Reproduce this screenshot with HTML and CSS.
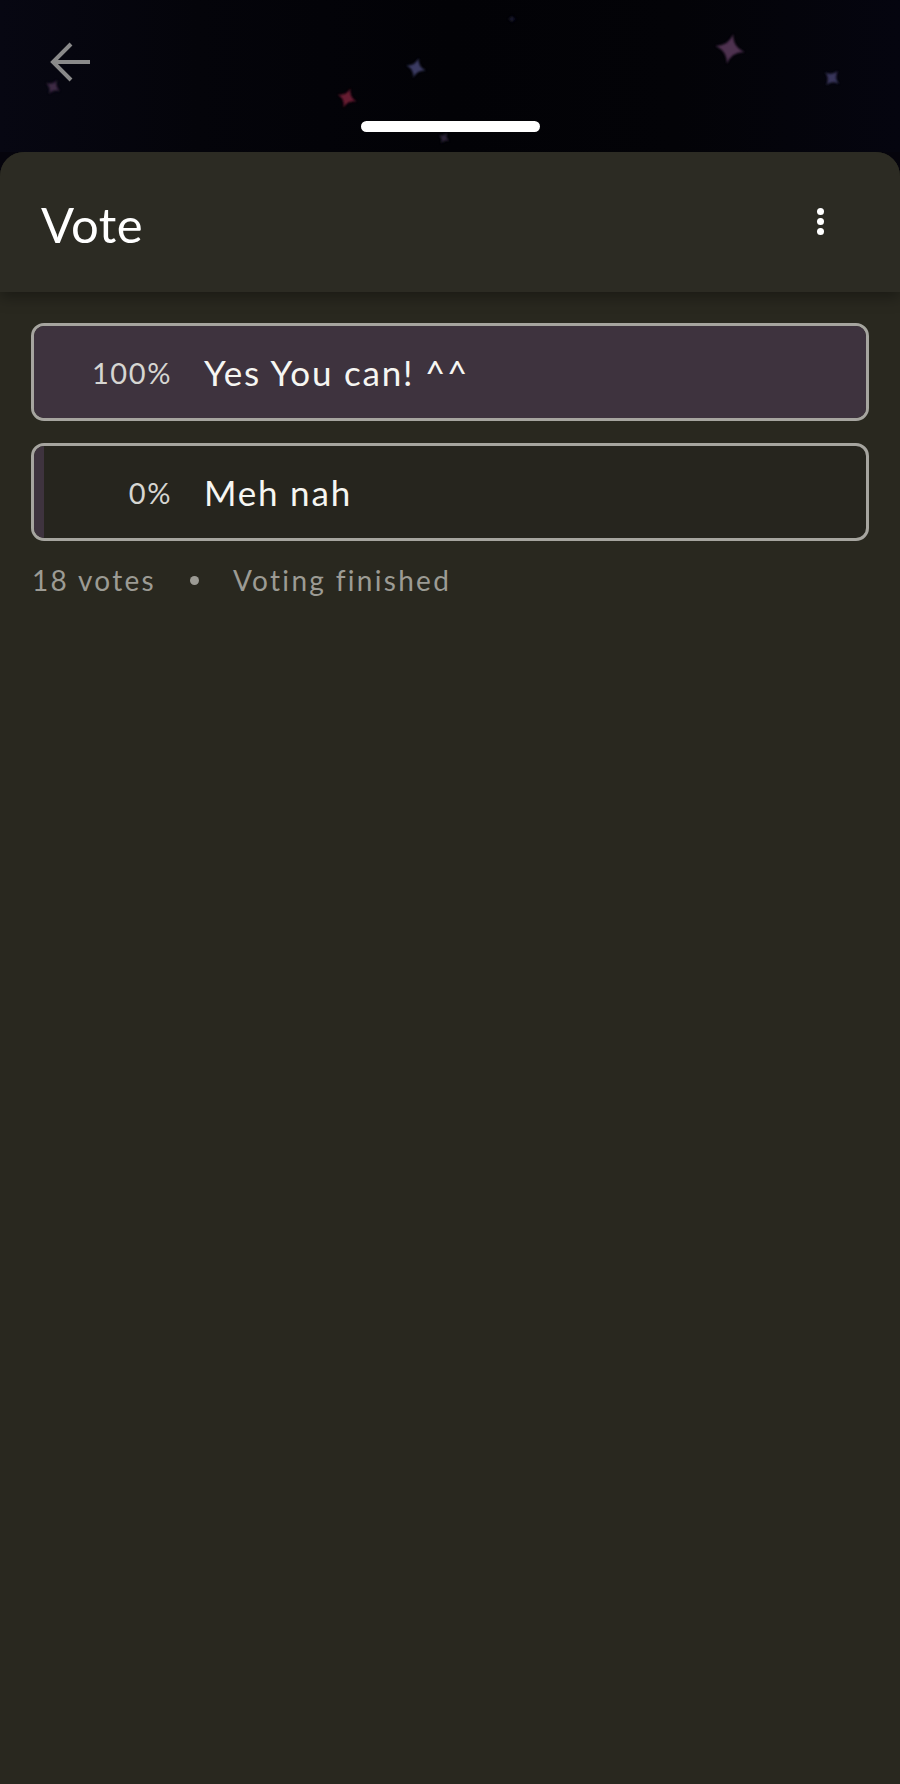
FILE: index.html
```html
<!DOCTYPE html>
<html lang="en">
<head>
    <meta charset="UTF-8">
    <meta name="viewport" content="width=device-width, initial-scale=1.0">
    <title>Vote</title>
    <link rel="stylesheet" href="styles.css">
</head>
<body>
    <div class="backdrop">
        <!-- sparkles behind the sheet -->
        <svg class="sky" width="900" height="152" viewBox="0 0 900 152">
            <defs>
                <path id="spark" d="M0,-1 Q0.16,-0.16 1,0 Q0.16,0.16 0,1 Q-0.16,0.16 -1,0 Q-0.16,-0.16 0,-1Z"/>
                <filter id="soft"><feGaussianBlur stdDeviation="0.8"/></filter>
            </defs>
            <g filter="url(#soft)">
                <use href="#spark" transform="translate(730 49) rotate(12) scale(15)" fill="#4e3050"/>
                <use href="#spark" transform="translate(832 78) rotate(40) scale(9)" fill="#37345a"/>
                <use href="#spark" transform="translate(416 68) rotate(15) scale(10)" fill="#3a3b62"/>
                <use href="#spark" transform="translate(347 98) rotate(20) scale(10)" fill="#661a30"/>
                <use href="#spark" transform="translate(53 87) rotate(30) scale(8)" fill="#3e2a44"/>
                <use href="#spark" transform="translate(444 138) rotate(30) scale(6)" fill="#2c2438"/>
                <use href="#spark" transform="translate(512 19) scale(4)" fill="#1c1c30"/>
            </g>
        </svg>
        <button class="back-btn" aria-label="Back">
            <svg width="40" height="40" viewBox="0 0 40 40">
                <path d="M40 20H3M21 2L3 20L21 38" fill="none" stroke="#8a8a8a" stroke-width="4"/>
            </svg>
        </button>
        <div class="handle"></div>
    </div>

    <main class="sheet">
        <header class="sheet-header">
            <h1>Vote</h1>
            <button class="menu-btn" aria-label="More">
                <span></span><span></span><span></span>
            </button>
        </header>

        <section class="poll">
            <div class="option">
                <div class="option-fill" style="width: 100%;"></div>
                <span class="percent">100%</span>
                <span class="label">Yes You can! ^^</span>
            </div>
            <div class="option">
                <div class="option-fill" style="width: 0%;"></div>
                <span class="percent">0%</span>
                <span class="label">Meh nah</span>
            </div>
            <p class="poll-meta">
                <span>18 votes</span>
                <span class="dot"></span>
                <span>Voting finished</span>
            </p>
        </section>
    </main>
</body>
</html>
```

FILE: styles.css
```css
/* Reset */
* {
    box-sizing: border-box;
    margin: 0;
    padding: 0;
}

body {
    font-family: Lato, 'Noto Sans', sans-serif;
    background-color: #05040c;
    color: #f2f2ee;
    min-height: 1784px;
    display: flex;
    flex-direction: column;
}

button {
    background: none;
    border: none;
    cursor: pointer;
}

/* Top area */
.backdrop {
    position: relative;
    height: 152px;
    padding-top: 42px;
    display: flex;
    flex-direction: column;
    background: linear-gradient(90deg, #070712 0%, #04040a 22%, #020206 50%, #030307 75%, #05050f 100%);
}

.sky {
    position: absolute;
    top: 0;
    left: 0;
}

.back-btn {
    position: relative;
    width: 40px;
    height: 40px;
    margin-left: 50px;
}

.back-btn svg {
    display: block;
}

.handle {
    position: relative;
    width: 179px;
    height: 11px;
    margin: 39px auto 0;
    border-radius: 6px;
    background-color: #fff;
}

/* Sheet */
.sheet {
    flex: 1;
    background-color: #29281f;
    border-radius: 24px 24px 0 0;
    overflow: hidden;
}

.sheet-header {
    height: 140px;
    padding: 0 72px 0 41px;
    display: flex;
    align-items: center;
    justify-content: space-between;
    background-color: #2c2b23;
    box-shadow: 0 5px 14px rgba(0, 0, 0, 0.35);
    position: relative;
}

.sheet-header h1 {
    font-size: 49px;
    font-weight: 400;
    letter-spacing: 0.5px;
    color: #fff;
    margin-top: 4px;
}

.menu-btn {
    display: flex;
    flex-direction: column;
    gap: 3px;
    padding: 4px;
    margin-top: -1px;
}

.menu-btn span {
    width: 7px;
    height: 7px;
    border-radius: 50%;
    background-color: #fff;
}

/* Poll */
.poll {
    padding: 31px 31px 0;
}

.option {
    position: relative;
    height: 98px;
    margin-bottom: 22px;
    border: 3px solid #a6a59f;
    border-radius: 13px;
    overflow: hidden;
    display: flex;
    align-items: center;
    background-color: #26251e;
}

.option-fill {
    position: absolute;
    top: 0;
    bottom: 0;
    left: 0;
    min-width: 10px;
    background-color: #3e333e;
}

.percent {
    position: relative;
    width: 138px;
    text-align: right;
    font-size: 29px;
    font-weight: 400;
    letter-spacing: 1.6px;
    color: #d6d6d2;
}

.label {
    position: relative;
    margin-left: 32px;
    font-size: 35px;
    letter-spacing: 1.8px;
    color: #f6f6f2;
}

.poll-meta {
    display: flex;
    align-items: center;
    margin-top: 1px;
    padding-left: 1px;
    font-size: 28px;
    letter-spacing: 2.3px;
    color: #9c9b94;
}

.poll-meta .dot {
    width: 9px;
    height: 9px;
    margin: 0 34px 0 34px;
    border-radius: 50%;
    background-color: #9c9b94;
}
```
